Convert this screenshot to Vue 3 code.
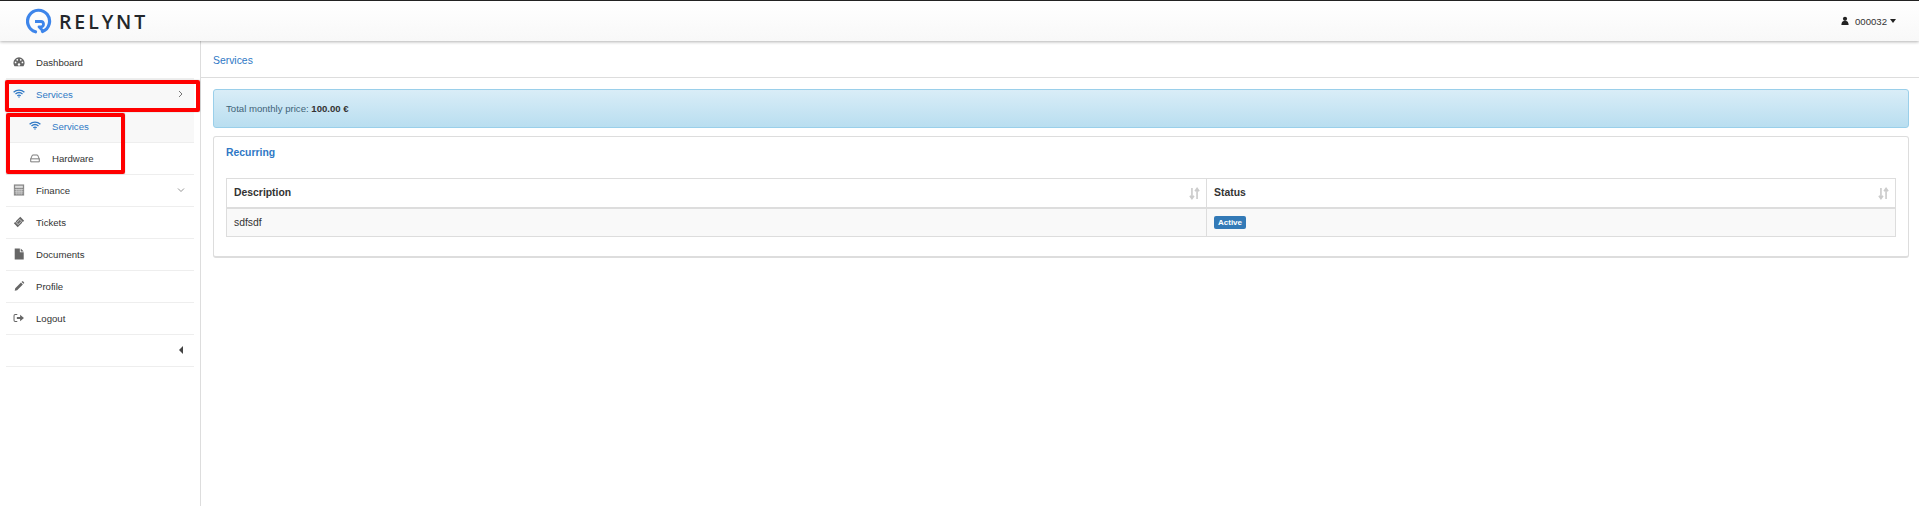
<script setup>
const items = [
  { label: 'Dashboard', icon: 'dash' },
  { label: 'Services', icon: 'wifi', active: true, chev: 'right' },
  { label: 'Services', icon: 'wifi', sub: true, current: true },
  { label: 'Hardware', icon: 'hdd', sub: true },
  { label: 'Finance', icon: 'calc', chev: 'down' },
  { label: 'Tickets', icon: 'ticket' },
  { label: 'Documents', icon: 'file' },
  { label: 'Profile', icon: 'pencil' },
  { label: 'Logout', icon: 'logout' }
]
</script>

<template>
  <div class="page">
    <header class="topbar">
      <div class="brand">
        <svg class="logo" viewBox="0 0 26 26" width="26" height="26">
          <path d="M9.500 23.800A11 11 0 1 1 16.500 23.500" fill="none" stroke="#3d85ea" stroke-width="3.200" stroke-linecap="round" />
          <path d="M9 13.500H15a2.700 2.700 0 0 1 .5 5.300H13L17.500 23.500" fill="none" stroke="#3d85ea" stroke-width="2.800" stroke-linejoin="round" />
        </svg>
        <span class="brand-name">RELYNT</span>
      </div>
      <div class="user">
        <svg viewBox="0 0 10 11" width="8" height="10"><circle cx="5" cy="2.800" r="2.600" fill="#222" /><path d="M0.500 10.500C0.500 7 2 5.500 3.500 5.500h3C8 5.500 9.500 7 9.500 10.500z" fill="#222" /></svg>
        <span>000032</span>
        <i class="caret"></i>
      </div>
    </header>

    <div class="body">
      <aside class="sidebar">
        <ul class="menu">
          <li v-for="(item, i) in items" :key="i" class="row" :class="{ active: item.active, sub: item.sub, current: item.current }">
            <svg class="ico" viewBox="0 0 14 14" width="12" height="12">
              <g v-if="item.icon === 'dash'" fill="#666">
                <path d="M7 1.500A6.500 6.500 0 0 0 0.500 8c0 1.500.5 3 1.300 4h10.400c.8-1 1.300-2.500 1.300-4A6.500 6.500 0 0 0 7 1.500z" />
                <circle cx="3" cy="7.500" r="1" fill="#fff" /><circle cx="5" cy="4.500" r="1" fill="#fff" /><circle cx="9" cy="4.500" r="1" fill="#fff" /><circle cx="11" cy="7.500" r="1" fill="#fff" /><circle cx="7" cy="10" r="1.400" fill="#fff" />
              </g>
              <g v-else-if="item.icon === 'wifi'" fill="none" stroke="#2f78c5" stroke-width="1.500">
                <path d="M0.700 5C4.300 1.700 9.700 1.700 13.300 5" /><path d="M2.900 7C5.300 4.900 8.700 4.900 11.100 7" /><path d="M5 9C6.200 8.100 7.800 8.100 9 9" />
                <circle cx="7" cy="10.400" r="0.900" fill="#2f78c5" stroke="none" />
              </g>
              <g v-else-if="item.icon === 'hdd'" fill="none" stroke="#666" stroke-width="1">
                <path d="M2 8L4 3.500h6L12 8v3.500H2z" /><path d="M2 8h10" />
              </g>
              <g v-else-if="item.icon === 'calc'">
                <rect x="1" y="0.500" width="12" height="13" fill="#888" />
                <rect x="2.500" y="2" width="9" height="2.500" fill="#ddd" />
                <path d="M2 6.500h10M2 8.500h10M2 10.500h10M4.500 5.500v7M7 5.500v7M9.500 5.500v7" stroke="#ddd" stroke-width="0.800" />
              </g>
              <g v-else-if="item.icon === 'ticket'">
                <path d="M8.500 1L13 5.500 11.800 6.700C11 6.300 10.300 7 10.700 7.800L5.500 13 1 8.500 2.200 7.300C3 7.700 3.700 7 3.300 6.200z" fill="#666" />
                <path d="M8 4l2 2-4 4-2-2z" fill="none" stroke="#fff" stroke-width="0.800" />
              </g>
              <path v-else-if="item.icon === 'file'" d="M2 0.500H8V5h4.500v8.500H2zM9 0.500L12.500 4H9z" fill="#666" />
              <path v-else-if="item.icon === 'pencil'" d="M2 12.500l.6-2.800L9.300 3l2.200 2.200-6.700 6.700zM10 2.300l.7-.7c.3-.3.700-.3 1 0l1.200 1.200c.3.300.3.700 0 1l-.7.700z" fill="#666" />
              <g v-else-if="item.icon === 'logout'">
                <path d="M5 3H2.500A1.300 1.300 0 0 0 1.200 4.300v5.400A1.300 1.300 0 0 0 2.500 11H5" fill="none" stroke="#666" stroke-width="1.200" />
                <path d="M4.500 5.700h3.800V3.200L12.800 7l-4.500 3.800V8.300H4.500z" fill="#666" />
              </g>
            </svg>
            <span class="label">{{ item.label }}</span>
            <svg v-if="item.chev === 'right'" class="chev" viewBox="0 0 8 8" width="8" height="8"><path d="M2 1l3 3-3 3" fill="none" stroke="#666" stroke-width="0.900" /></svg>
            <svg v-if="item.chev === 'down'" class="chev" viewBox="0 0 8 8" width="8" height="8"><path d="M1 2.500l3 3 3-3" fill="none" stroke="#888" stroke-width="0.900" /></svg>
          </li>
          <li class="row toggler"><i class="caret-left"></i></li>
        </ul>
      </aside>

      <main class="content">
        <div class="crumb">Services</div>
        <div class="inner">
          <div class="alert">Total monthly price: <b>100.00 €</b></div>
          <section class="panel">
            <h3>Recurring</h3>
            <table>
              <thead>
                <tr>
                  <th class="col-desc">Description<svg class="sort" viewBox="0 0 12 14" width="11" height="13"><path d="M3.200 1v11M1 9.500l2.200 3 2.200-3M8.800 13V2M6.600 4.500l2.200-3 2.200 3" fill="none" stroke="#ccc" stroke-width="1.800" /></svg></th>
                  <th>Status<svg class="sort" viewBox="0 0 12 14" width="11" height="13"><path d="M3.200 1v11M1 9.500l2.200 3 2.200-3M8.800 13V2M6.600 4.500l2.200-3 2.200 3" fill="none" stroke="#ccc" stroke-width="1.800" /></svg></th>
                </tr>
              </thead>
              <tbody>
                <tr>
                  <td>sdfsdf</td>
                  <td><span class="badge">Active</span></td>
                </tr>
              </tbody>
            </table>
          </section>
        </div>
      </main>
    </div>

    <div class="mark mark-a"></div>
    <div class="mark mark-b"></div>
  </div>
</template>

<style>
html, body { margin: 0; background: #fff; }
</style>

<style scoped>
.page {
  position: relative;
  width: 1919px;
  height: 506px;
  overflow: hidden;
  font-family: "Liberation Sans", Arial, sans-serif;
  font-size: 9.6px;
  color: #333;
  background: #fff;
}
.topbar {
  height: 41px;
  box-sizing: border-box;
  border-top: 1px solid #222;
  background: linear-gradient(#fff, #f8f8f8);
  box-shadow: 0 1px 3px rgba(0, 0, 0, .3);
  display: flex;
  align-items: center;
  justify-content: space-between;
  padding: 0 23px 0 26px;
  position: relative;
  z-index: 1;
}
.brand { display: flex; align-items: center; gap: 7px; }
.brand-name {
  font-family: "Open Sans", sans-serif;
  font-weight: 600;
  font-size: 19.5px;
  letter-spacing: 2.9px;
  color: #23272b;
}
.user { display: flex; align-items: center; gap: 6px; color: #333; }
.caret { border-style: solid; border-color: #222 transparent transparent; border-width: 4px 3px 0; margin-left: -3px; }
.body { display: flex; height: 465px; }
.sidebar { width: 201px; box-sizing: border-box; border-right: 1px solid #ddd; padding: 6px 6px 0; flex: none; }
.menu { list-style: none; margin: 0; padding: 0; width: 188px; }
.row {
  height: 32px;
  box-sizing: border-box;
  border-bottom: 1px solid #eee;
  display: flex;
  align-items: center;
  padding: 0 0 1px 7px;
  color: #333;
}
.row.active { background: #f8f8f8; color: #2f78c5; }
.row.sub { background: #fff; padding-left: 23px; }
.row.current { background: #f8f8f8; color: #2f78c5; }
.ico { flex: none; margin-right: 11px; }
.label { flex: 1; }
.chev { margin-right: 9px; }
.toggler { justify-content: flex-end; padding-right: 11px; }
.caret-left { border-style: solid; border-color: transparent #444 transparent transparent; border-width: 4px 4px 4px 0; }
.content { flex: 1; min-width: 0; }
.crumb {
  height: 37px;
  box-sizing: border-box;
  border-bottom: 1px solid #ddd;
  padding: 14px 0 0 12px;
  font-size: 10.4px;
  color: #2f78c5;
}
.inner { padding: 11px 10px 0 12px; }
.alert {
  height: 39px;
  box-sizing: border-box;
  border: 1px solid #9acfea;
  border-radius: 3px;
  background: linear-gradient(#d9edf7, #b9def0);
  color: #3f6478;
  padding-left: 12px;
  font-size: 9.6px;
  line-height: 37px;
}
.alert b { color: #333; }
.panel {
  margin-top: 8px;
  height: 122px;
  box-sizing: border-box;
  border: 1px solid #ddd;
  border-bottom-width: 2px;
  border-radius: 3px;
  padding: 9px 12px 0;
}
h3 { margin: 0 0 18px; font-size: 10.4px; line-height: 14px; font-weight: bold; color: #2f78c5; }
table { width: 100%; border-collapse: collapse; table-layout: fixed; }
th {
  position: relative;
  height: 29px;
  box-sizing: border-box;
  border: 1px solid #ddd;
  border-bottom-width: 2px;
  padding: 0 7px;
  text-align: left;
  font-size: 10.4px;
  color: #333;
}
.col-desc { width: 980px; }
td { height: 29px; box-sizing: border-box; border: 1px solid #ddd; padding: 0 7px; background: #f9f9f9; font-size: 10.4px; }
.sort { position: absolute; right: 6px; top: 8px; }
.badge { display: inline-block; background: #337ab7; color: #fff; font-size: 8px; font-weight: bold; padding: 2px 4px; border-radius: 2px; }
.mark { position: absolute; border: 4px solid #f00; border-radius: 2px; box-sizing: border-box; box-shadow: 0 0 1px rgba(0, 0, 0, .5); }
.mark-a { left: 5px; top: 80px; width: 195px; height: 32px; }
.mark-b { left: 6px; top: 113px; width: 119px; height: 61px; }
</style>
